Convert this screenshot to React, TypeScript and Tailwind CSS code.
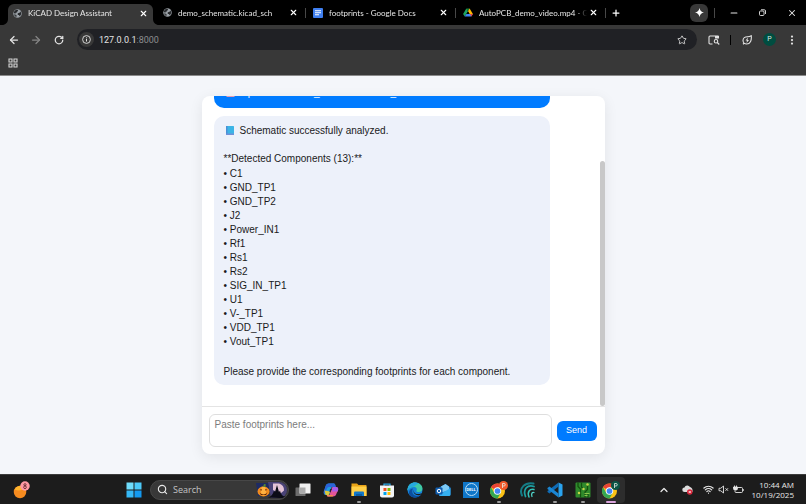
import React, { useLayoutEffect, useRef, useState } from 'react';
import {
  ArrowLeft,
  ArrowRight,
  ChevronUp,
  Minus,
  MoreVertical,
  Plus,
  RotateCw,
  Search,
  Star,
  Wifi,
  X,
} from 'lucide-react';

const components = [
  'C1',
  'GND_TP1',
  'GND_TP2',
  'J2',
  'Power_IN1',
  'Rf1',
  'Rs1',
  'Rs2',
  'SIG_IN_TP1',
  'U1',
  'V-_TP1',
  'VDD_TP1',
  'Vout_TP1',
];

/* ---------- favicons ---------- */

const GlobeIcon = () => (
  <svg viewBox="0 0 18 18" className="size-[9px] shrink-0">
    <circle cx="9" cy="9" r="8.5" fill="#9aa0a6" />
    <path d="M8 1.5c2 .8 2.6 1.6 1.6 2.8L7.8 5.6l-.6 2H5.4L4.6 9.4 1.6 8C2 4.4 4.6 2 8 1.5z" fill="#27292c" />
    <path d="M10 8.4l3.2-.8 1.4-2.6 1.8 3.2c.2 2.6-1 5-3 6.4l-1.6-2.4H10l-1-2z" fill="#27292c" />
    <path d="M2 10.4l4 1 1.4 1.8-.6 3C4.2 15.4 2.4 13.2 2 10.4z" fill="#3a3d40" />
  </svg>
);

const DocsIcon = () => (
  <svg viewBox="0 0 20 20" className="size-[10px] shrink-0">
    <rect width="20" height="20" rx="2" fill="#3f7ff0" />
    <path d="M4 5.5h12M4 9.5h12M4 13.5h8" stroke="#fff" strokeWidth="2" />
  </svg>
);

const DriveIcon = () => (
  <svg viewBox="0 0 24 22" className="h-[9px] w-[10px] shrink-0">
    <path d="M8 1l4 7-8 13-4-6.5z" fill="#1ea362" />
    <path d="M8 1h8l-4 7z" fill="#188038" />
    <path d="M16 1l8 13.5h-8L12 8z" fill="#ffba00" />
    <path d="M8 14.5h16L20 21H4z" fill="#4285f4" />
    <path d="M17 14.5h7L20 21z" fill="#ea4335" />
    <path d="M12 8.5l3.6 6H8.4z" fill="#000" />
  </svg>
);

const tabs = [
  { title: 'KiCAD Design Assistant', icon: <GlobeIcon />, active: true, divider: false },
  { title: 'demo_schematic.kicad_sch', icon: <GlobeIcon />, active: false, divider: true },
  { title: 'footprints - Google Docs', icon: <DocsIcon />, active: false, divider: true },
  { title: 'AutoPCB_demo_video.mp4 - Google Drive', icon: <DriveIcon />, active: false, divider: true },
];

const TabStrip = () => (
  <div className="flex h-[25px] items-center bg-black pl-2 font-[Lato,'Open_Sans',sans-serif] text-[8px] text-[#e6e6e6]">
    {tabs.map((tab) => (
      <div key={tab.title} className="flex h-full w-[150px] min-w-0 items-center">
        <div
          className={`relative flex min-w-0 flex-1 items-center ${
            tab.active ? 'mt-1 h-[21px] self-start rounded-t-[6px] bg-[#383838] pb-[3px]' : 'h-full'
          }`}
        >
          {tab.active && (
            <>
              <svg viewBox="0 0 6 6" className="absolute bottom-0 -left-1.5 size-1.5" fill="#383838">
                <path d="M6 0v6H0c3.5 0 6-2.5 6-6z" />
              </svg>
              <svg viewBox="0 0 6 6" className="absolute -right-1.5 bottom-0 size-1.5" fill="#383838">
                <path d="M0 0v6h6C2.5 6 0 3.5 0 0z" />
              </svg>
            </>
          )}
          <button type="button" className="flex min-w-0 flex-1 items-center gap-1.5 pl-[5px] text-left">
            {tab.icon}
            <span className="min-w-0 flex-1 overflow-hidden whitespace-nowrap [mask-image:linear-gradient(to_right,black_90%,transparent)]">
              {tab.title}
            </span>
          </button>
          <button type="button" aria-label="Close tab" className="mr-1 flex size-3 items-center justify-center text-white">
            <X className="size-[9px]" strokeWidth={3} />
          </button>
        </div>
        <div className="flex w-[5px] justify-center">{tab.divider && <span className="h-2.5 w-px bg-[#484848]" />}</div>
      </div>
    ))}
    <button type="button" aria-label="New tab" className="ml-0.5 flex size-3 items-center justify-center text-white">
      <Plus className="size-[10px]" strokeWidth={3} />
    </button>
    <div className="ml-auto flex items-center">
      <button type="button" aria-label="Gemini" className="flex size-[18px] items-center justify-center rounded-md bg-[#383838]">
        <svg viewBox="0 0 20 20" className="size-[9px]" fill="#fff">
          <path d="M10 0c1.2 6 4 8.8 10 10-6 1.2-8.8 4-10 10C8.8 14 6 11.2 0 10 6 8.8 8.8 6 10 0z" />
        </svg>
      </button>
      <span className="ml-1.5 h-2.5 w-px bg-[#484848]" />
      <button type="button" aria-label="Minimize" className="ml-1 flex w-[29px] justify-center">
        <Minus className="size-2.5" strokeWidth={2.5} />
      </button>
      <button type="button" aria-label="Restore" className="flex w-[29px] justify-center">
        <svg viewBox="0 0 14 14" className="size-[7px]" fill="none" stroke="currentColor" strokeWidth="1.8">
          <rect x="1" y="4" width="9" height="9" rx="2" />
          <path d="M4 1.5h6.5a2.5 2.5 0 012.5 2.5v6" />
        </svg>
      </button>
      <button type="button" aria-label="Close" className="flex w-[29px] justify-center">
        <X className="size-2.5" strokeWidth={2.5} />
      </button>
    </div>
  </div>
);

const Toolbar = () => (
  <div className="flex h-[29px] items-center bg-[#383838] px-2 text-[#e3e3e3]">
    <button type="button" aria-label="Back" className="flex w-3 justify-center">
      <ArrowLeft className="size-3" strokeWidth={2.5} />
    </button>
    <button type="button" aria-label="Forward" className="ml-2.5 flex w-3 justify-center text-[#858585]">
      <ArrowRight className="size-3" strokeWidth={2.5} />
    </button>
    <button type="button" aria-label="Reload" className="ml-[11px] flex w-3 justify-center">
      <RotateCw className="size-2.5" strokeWidth={3} />
    </button>
    <div className="ml-3 flex h-[21px] min-w-0 flex-1 items-center rounded-full bg-[#202125] pr-2.5 pl-0.5">
      <button type="button" aria-label="Site information" className="flex size-[15px] items-center justify-center rounded-full bg-[#383838]">
        <svg viewBox="0 0 18 18" className="size-[9px]" fill="none" stroke="currentColor" strokeWidth="1.8">
          <circle cx="9" cy="9" r="7.8" />
          <path d="M9 8v5M9 4.8v1.8" strokeWidth="2" />
        </svg>
      </button>
      <div className="relative ml-[5px] min-w-0 flex-1 text-[9px] leading-3">
        <span aria-hidden="true">
          127.0.0.1<span className="text-[#8c8d90]">:8000</span>
        </span>
        <input
          aria-label="Address"
          defaultValue="127.0.0.1:8000"
          className="absolute inset-0 w-full bg-transparent text-transparent caret-white outline-none"
        />
      </div>
      <button type="button" aria-label="Bookmark this page">
        <Star className="size-2.5" strokeWidth={2} />
      </button>
    </div>
    <button type="button" aria-label="Search side panel" className="ml-2.5 flex w-[13px] justify-center">
      <svg viewBox="0 0 24 20" className="h-2.5 w-3" fill="none" stroke="currentColor" strokeWidth="2.2">
        <path d="M9 18H4a2 2 0 01-2-2V4a2 2 0 012-2h16v4" />
        <path d="M14 2h8v5h-8z" fill="currentColor" stroke="none" />
        <circle cx="16" cy="12.5" r="3.5" />
        <path d="M18.5 15l4 4" />
      </svg>
    </button>
    <span className="ml-2.5 h-2.5 w-px bg-black" />
    <button type="button" aria-label="Energy saver" className="ml-2.5 flex w-3 justify-center">
      <svg viewBox="0 0 20 20" className="size-2.5" fill="none" stroke="currentColor" strokeWidth="2.2">
        <path d="M18.5 1.5C19.5 10 17 18 9.5 18 5 18 2 15 2 11c0-5 4-7.5 9-7.5 3 0 5-.5 7.5-2zM4.5 16L2 18.5" />
        <path d="M12 5L7 11h3l-1 5 5-6h-3z" fill="currentColor" stroke="none" />
      </svg>
    </button>
    <button type="button" aria-label="Profile" className="ml-2.5 flex size-[13px] items-center justify-center rounded-full bg-[#004d40] text-[7px] text-[#d5e6e2]">
      P
    </button>
    <button type="button" aria-label="Menu" className="ml-2.5 flex w-3 justify-center">
      <MoreVertical className="size-3" strokeWidth={2.5} />
    </button>
  </div>
);

const BookmarksBar = () => (
  <div className="flex h-[22px] items-center border-b border-[#8a8a8a] bg-[#383838] px-2 pt-px pb-1 text-[#d6d6d6]">
    <button type="button" aria-label="All apps">
      <svg viewBox="0 0 20 20" className="size-2.5" fill="none" stroke="currentColor" strokeWidth="2.2">
        <path d="M2 2h6v6H2zM12 2h6v6h-6zM2 12h6v6H2zM12 12h6v6h-6z" />
      </svg>
    </button>
  </div>
);

/* ---------- chat ---------- */

const BlueBook = () => (
  <svg viewBox="0 0 16 18" className="mr-1.5 ml-0.5 inline-block h-[9px] w-2 align-[-1px]">
    <rect width="16" height="18" rx="1" fill="#3cb4e6" />
    <rect width="3" height="18" fill="#4a8fd6" />
    <rect y="15" width="16" height="3" fill="#6f8fd8" />
  </svg>
);

const UploadTray = () => (
  <svg viewBox="0 0 18 18" className="mr-1.5 ml-0.5 inline-block size-[9px] align-[-1px]">
    <path d="M9 1l5 5h-3v6H7V6H4z" fill="#e8f1ff" />
    <path d="M1 10h3v4h10v-4h3v8H1z" fill="#e39bb5" />
  </svg>
);

const MessageList = () => {
  const listRef = useRef<HTMLDivElement>(null);
  const [thumb, setThumb] = useState({ top: 0, height: 0 });

  const updateThumb = () => {
    const el = listRef.current;
    if (!el) return;
    setThumb({
      top: (el.scrollTop / el.scrollHeight) * 100,
      height: (el.clientHeight / el.scrollHeight) * 100,
    });
  };

  // keep the newest message in view
  useLayoutEffect(() => {
    const el = listRef.current;
    if (el) el.scrollTop = el.scrollHeight;
    updateThumb();
  }, []);

  return (
    <div className="flex min-h-0 flex-1">
      <div
        ref={listRef}
        onScroll={updateThumb}
        className="flex flex-1 flex-col gap-2 overflow-y-auto px-3 pt-16 pb-[21px] text-[10px] leading-[14px] [scrollbar-width:none]"
      >
        <div className="w-[90%] shrink-0 rounded-[10px] bg-[#007bff] px-2.5 py-2 text-white">
          <UploadTray />
          Uploaded: demo_schematic.kicad_sch
        </div>
        <div className="w-[90%] shrink-0 rounded-[10px] bg-[#edf1fa] px-2.5 pt-2 pb-1.5 text-[#1a1a1a]">
          <p>
            <BlueBook />
            Schematic successfully analyzed.
          </p>
          <p className="mt-3.5">**Detected Components ({components.length}):**</p>
          <ul className="mt-px">
            {components.map((name) => (
              <li key={name}>• {name}</li>
            ))}
          </ul>
          <p className="mt-4">Please provide the corresponding footprints for each component.</p>
        </div>
      </div>
      <div className="w-[5px]">
        <div className="relative w-full rounded-sm bg-[#c8c8c8]" style={{ top: `${thumb.top}%`, height: `${thumb.height}%` }} />
      </div>
    </div>
  );
};

const ChatPanel = () => {
  const [text, setText] = useState('');

  return (
    <main className="flex min-h-0 flex-1 items-center justify-center bg-[#f4f6fa] font-['Liberation_Sans',Arial,sans-serif]">
      <section className="flex h-[90%] w-1/2 flex-col overflow-hidden rounded-lg bg-white shadow-[0_3px_14px_rgba(0,0,0,0.08)]">
        <MessageList />
        <form
          onSubmit={(e) => e.preventDefault()}
          className="flex items-center gap-[5px] border-t border-[#e4e4e4] py-[7px] pr-2 pl-[7px]"
        >
          <textarea
            aria-label="Footprints"
            placeholder="Paste footprints here..."
            value={text}
            onChange={(e) => setText(e.target.value)}
            className="h-[33px] min-w-0 flex-1 resize-none rounded-md border border-[#dedede] px-[5px] py-1 text-[10px] leading-3 outline-none placeholder:text-[#7c7c7c]"
          />
          <button type="submit" className="h-5 w-10 rounded-md bg-[#007bff] text-[9px] text-white">
            Send
          </button>
        </form>
      </section>
    </main>
  );
};

/* ---------- taskbar ---------- */

const ChromeLogo = ({ badge }: { badge: string }) => (
  <svg viewBox="0 0 40 36" className="h-[18px] w-5">
    <circle cx="17" cy="20" r="15" fill="#fbc116" />
    <path d="M17 20L4 12.5A15 15 0 0130 12.5H17z" fill="#ea4335" />
    <path d="M4 12.5A15 15 0 0017 35l6.5-11.3L17 20l-6.5 3.7z" fill="#34a853" />
    <circle cx="17" cy="20" r="7.5" fill="#fff" />
    <circle cx="17" cy="20" r="5.7" fill="#4285f4" />
    <circle cx="29" cy="9" r="9" fill={badge} />
    <path d="M27 14V5h3a2.5 2.5 0 010 5h-3" fill="none" stroke="#e6efe9" strokeWidth="1.6" />
  </svg>
);

const taskbarApps = [
  {
    name: 'Task View',
    running: false,
    icon: (
      <svg viewBox="0 0 32 32" className="size-4">
        <rect x="1" y="11" width="20" height="17" rx="1" fill="#6c6c6c" />
        <rect x="9" y="3" width="22" height="20" rx="1" fill="#f1f1f1" />
        <rect x="9" y="11" width="12" height="12" fill="#ababab" />
      </svg>
    ),
  },
  {
    name: 'Copilot',
    running: false,
    icon: (
      <svg viewBox="0 0 32 32" className="size-4">
        <path d="M12 3h9c2 0 3 1 3.5 3l1 4h-6c-2 0-3 1-3.5 3l-3 10c-.5 2-2 3-4 3H6c-4 0-5-3-4-7L5 9c1-4 3-6 7-6z" fill="#1f9de0" />
        <path d="M12 3h9c2 0 3 1 3.5 3l1 4H12c-3 0-4 2-5 5l-4 9c-2-1-2-4-1-7L5 9c1-4 3-6 7-6z" fill="#2b63d9" />
        <path d="M3 17l2 8c1 1 2 1 4 1 2 0 3-1 4-3l1-4z" fill="#d7c83c" />
        <path d="M20 29h-9c-2 0-3-1-3.5-3h3c2 0 3-1 3.5-3l3-10c.5-2 2-3 4-3h5c4 0 5 3 4 7l-3 6c-1 4-3 6-7 6z" fill="#e2559b" />
        <path d="M20 10h6c4 0 5 3 4 7l-1 2H18l1-6z" fill="#a95be8" />
        <path d="M11 29c-2 0-3-1-3.5-3h13l-1 3z" fill="#f58a4b" />
        <path d="M14 15l3-2 1 1-3 6-2 0z" fill="#17203a" />
      </svg>
    ),
  },
  {
    name: 'File Explorer',
    running: true,
    icon: (
      <svg viewBox="0 0 32 32" className="size-4">
        <path d="M1 3h11l3 3h15a1 1 0 011 1v21H1z" fill="#e8a317" />
        <path d="M1 9h30v19H1z" fill="#ffcf48" />
        <path d="M6 28v-7a2 2 0 012-2h16a2 2 0 012 2v7z" fill="#1378c8" />
        <path d="M10 24h12v4H10z" fill="#0b5ca3" />
      </svg>
    ),
  },
  {
    name: 'Microsoft Store',
    running: false,
    icon: (
      <svg viewBox="0 0 32 32" className="size-4">
        <path d="M10 9V4h12v5" fill="none" stroke="#2aa7e6" strokeWidth="2.5" />
        <path d="M2 7h28v20a4 4 0 01-4 4H6a4 4 0 01-4-4z" fill="#f2f4f6" />
        <path d="M9 12h6v6H9z" fill="#f25022" />
        <path d="M17 12h6v6h-6z" fill="#7fba00" />
        <path d="M9 20h6v6H9z" fill="#00a4ef" />
        <path d="M17 20h6v6h-6z" fill="#ffb900" />
      </svg>
    ),
  },
  {
    name: 'Microsoft Edge',
    running: false,
    icon: (
      <svg viewBox="0 0 32 32" className="size-4">
        <circle cx="16" cy="16" r="15" fill="#1583d8" />
        <path d="M1 15C2 6 8 1 16 1c9 0 15 6 15 12 0 5-4 7-7 7-4 0-6-1-5-3 2-4-1-7-5-7-6 0-11 3-13 7z" fill="#3fc9a5" />
        <path d="M1 15C2 6 8 1 16 1c3 0 6 1 8 2-5 0-6 5-10 6-6 1-11 3-13 8z" fill="#25a9df" />
        <path d="M12 13c-4 7 0 15 9 15 3 0 6-2 8-4-3 5-8 7-13 7C8 31 3 26 4 20c1-4 4-7 8-7z" fill="#0c4f9e" />
        <path d="M14 15c-2 5 3 10 9 9 3 0 5-1 7-2l-2 3c-3 2-8 2-11 0-4-2-5-7-3-10z" fill="#1c1c1c" />
      </svg>
    ),
  },
  {
    name: 'Outlook',
    running: false,
    icon: (
      <svg viewBox="0 0 32 32" className="size-4">
        <path d="M8 11L21 4l10 7v14a2 2 0 01-2 2H8z" fill="#1672c9" />
        <path d="M12 9l9-5 7 5v8l-16 4z" fill="#7cc9f5" />
        <path d="M8 26l23-14v13a3 3 0 01-3 3H11a3 3 0 01-3-2z" fill="#35b0f0" />
        <rect x="1" y="11" width="14" height="14" rx="2" fill="#0f5cae" />
        <circle cx="8" cy="18" r="3.5" fill="none" stroke="#fff" strokeWidth="2" />
      </svg>
    ),
  },
  {
    name: 'Dell',
    running: false,
    icon: (
      <span className="flex size-4 items-center justify-center bg-[#0f76c8]">
        <span className="flex size-[13px] items-center justify-center rounded-full border border-[#b9dcf5] text-[4px] font-bold text-white">
          DELL
        </span>
      </span>
    ),
  },
  { name: 'Google Chrome (P)', running: true, icon: <ChromeLogo badge="#f0592b" /> },
  {
    name: 'Waves',
    running: false,
    icon: (
      <svg viewBox="0 0 32 32" className="size-4" fill="none" strokeLinecap="round">
        <path d="M29 3C12 0 -1 12 6 27" stroke="#157c86" strokeWidth="4" />
        <path d="M30 9C17 5 7 14 13 29" stroke="#1da0a2" strokeWidth="3.5" />
        <path d="M30 15c-9-2-14 5-10 15" stroke="#35c4bb" strokeWidth="3" />
        <path d="M30 21c-4-1-6 3-4 8" stroke="#4fd3c8" strokeWidth="2.5" />
      </svg>
    ),
  },
  {
    name: 'Visual Studio Code',
    running: true,
    icon: (
      <svg viewBox="0 0 32 32" className="size-4">
        <path d="M23 1l8 4v22l-8 4z" fill="#2aa3ee" />
        <path d="M23 1v8L5 23l-4-3v-2z" fill="#0f6bb5" />
        <path d="M23 31v-8L5 9l-4 3v2z" fill="#1b86d3" />
      </svg>
    ),
  },
  {
    name: 'PCB Editor',
    running: true,
    icon: (
      <svg viewBox="0 0 32 32" className="size-4">
        <rect x="1" y="1" width="30" height="30" rx="2" fill="#2f8a2c" />
        <path d="M6 1v8l5 5v17M13 1v9l4 4M20 31V20l5-5V6M26 31v-7" fill="none" stroke="#14500f" strokeWidth="2.5" />
        <circle cx="8" cy="22" r="2.5" fill="#c5d44a" />
        <circle cx="17" cy="14" r="2.5" fill="#c5d44a" />
        <circle cx="25" cy="5" r="2.5" fill="#c5d44a" />
        <path d="M19 23h10M19 27h6" stroke="#8bc34a" strokeWidth="2" />
      </svg>
    ),
  },
  { name: 'Google Chrome', running: true, icon: <ChromeLogo badge="#0b5446" /> },
];

const Taskbar = () => (
  <footer className="flex h-[30px] items-center border-t border-[#3c3c3c] bg-[#1c1c1c] text-[8px] text-[#e8e8e8]">
    <div className="w-[126px] shrink-0 pl-[13px]">
      <button type="button" aria-label="Weather" className="block">
        <svg viewBox="0 0 36 36" className="size-[18px]">
          <circle cx="14" cy="22" r="12.5" fill="#f68b1f" />
          <path d="M3 17a12.5 12.5 0 0120-4c-4 6-12 8-20 4z" fill="#ffb52e" />
          <circle cx="24" cy="10" r="9.5" fill="#ff99a4" />
          <circle cx="24" cy="7.5" r="2.2" fill="none" stroke="#4a1a20" strokeWidth="1.5" />
          <circle cx="24" cy="12.5" r="2.7" fill="none" stroke="#4a1a20" strokeWidth="1.5" />
        </svg>
      </button>
    </div>
    <button type="button" aria-label="Start" className="shrink-0">
      <svg viewBox="0 0 32 32" className="size-4">
        <path d="M1 1h14v14H1z" fill="#6fdcfb" />
        <path d="M17 1h14v14H17z" fill="#4cc9f8" />
        <path d="M1 17h14v14H1z" fill="#35b8f6" />
        <path d="M17 17h14v14H17z" fill="#1399f0" />
      </svg>
    </button>
    <div className="ml-2 flex h-5 w-[139px] items-center overflow-hidden rounded-full border border-[#474747] bg-[#383838] pl-1.5">
      <Search className="size-[11px] shrink-0" strokeWidth={2.5} />
      <input
        type="search"
        aria-label="Search"
        placeholder="Search"
        className="ml-[5px] min-w-0 flex-1 bg-transparent text-[9px] outline-none placeholder:text-[#c4c4c4]"
      />
      <svg viewBox="0 0 68 36" className="h-[18px] w-[34px] shrink-0">
        <path d="M4 4h26v26H8z" fill="#1d2a63" />
        <path d="M28 2h22a16 16 0 010 32H34z" fill="#4a4377" />
        <path d="M38 5h12a13 13 0 0110 14L52 26 38 18z" fill="#e3c4d6" />
        <path d="M27 33c7-1 11-6 13-14l2 3 4-14 4 14 2-3c2 8 5 12 12 12-3 3-7 3-12 3z" fill="#0b0c16" />
        <ellipse cx="19" cy="21" rx="12" ry="10" fill="#f28c1c" />
        <ellipse cx="19" cy="20" rx="5" ry="9" fill="#ffb141" />
        <path d="M18 12l2-6 4 1-2 5z" fill="#5a8a2c" />
        <path d="M11 18l4-2 1 3zM22 19l1-3 4 2zM11 23c5 5 11 5 16 0l-3 5H14z" fill="#5c2405" />
      </svg>
    </div>
    <nav className="flex h-full items-center">
      {taskbarApps.map((app) => (
        <button
          key={app.name}
          type="button"
          aria-label={app.name}
          className={`relative flex h-[26px] w-7 items-center justify-center rounded-sm ${
            app.name === 'Google Chrome' ? 'bg-[#2d2d2d]' : ''
          }`}
        >
          {app.icon}
          {app.running && (
            <span
              className={`absolute bottom-0 left-1/2 h-0.5 -translate-x-1/2 rounded-full ${
                app.name === 'Google Chrome' ? 'w-2.5 bg-[#d9a3dc]' : 'w-1 bg-[#9a9a9a]'
              }`}
            />
          )}
        </button>
      ))}
    </nav>
    <div className="ml-auto flex items-center pr-3">
      <button type="button" aria-label="Show hidden icons">
        <ChevronUp className="size-3" strokeWidth={2.5} />
      </button>
      <svg viewBox="0 0 22 20" className="ml-3 h-2.5 w-[11px]">
        <path d="M5 14a4.5 4.5 0 010-9 6 6 0 0111-1c3 1 5 3 5 6v4z" fill="#dcdcdc" />
        <circle cx="15.5" cy="14" r="5.5" fill="#d8283c" />
        <path d="M13.5 12l4 4M17.5 12l-4 4" stroke="#fff" strokeWidth="1.5" />
      </svg>
      <button type="button" aria-label="Network, volume and battery" className="ml-2.5 flex items-center gap-1">
        <Wifi className="size-[11px]" strokeWidth={2.5} />
        <svg viewBox="0 0 22 18" className="h-[9px] w-[11px]" fill="none" stroke="currentColor" strokeWidth="1.8">
          <path d="M2 6.5h3.5L11 2v14l-5.5-4.5H2zM15 6.5l5 5M20 6.5l-5 5" />
        </svg>
        <svg viewBox="0 0 22 18" className="h-[9px] w-[11px]" fill="none" stroke="currentColor" strokeWidth="1.8">
          <path d="M10 5h7a2 2 0 012 2v6a2 2 0 01-2 2H6a2 2 0 01-2-2v-2M21 8.5v3" />
          <path d="M3 1v3M7 1v3" />
          <path d="M1 4h8v3a3 3 0 01-3 3H4a3 3 0 01-3-3z" fill="currentColor" />
        </svg>
      </button>
      <div className="ml-2 text-right leading-[10px]">
        <div>10:44 AM</div>
        <div>10/19/2025</div>
      </div>
    </div>
  </footer>
);

const App: React.FC = () => (
  <div className="flex h-screen flex-col overflow-hidden font-['Open_Sans','Noto_Sans',sans-serif]">
    <header className="font-[Roboto,'Open_Sans',sans-serif]">
      <TabStrip />
      <Toolbar />
      <BookmarksBar />
    </header>
    <ChatPanel />
    <Taskbar />
  </div>
);

export default App;
